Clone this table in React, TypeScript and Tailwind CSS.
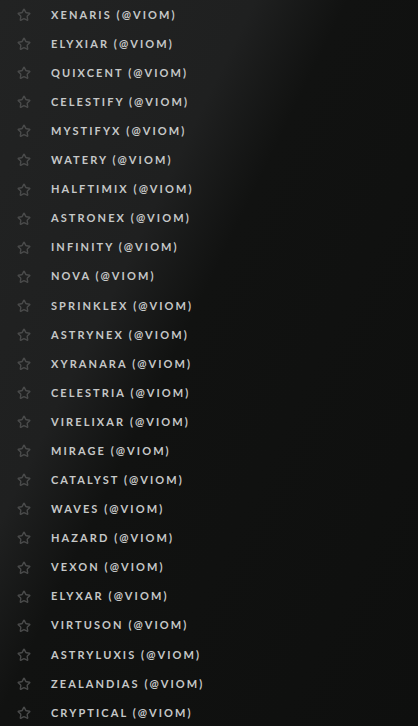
import { Star } from "lucide-react";

const names = [
  "XENARIS", "ELYXIAR", "QUIXCENT", "CELESTIFY", "MYSTIFYX", "WATERY", "HALFTIMIX",
  "ASTRONEX", "INFINITY", "NOVA", "SPRINKLEX", "ASTRYNEX", "XYRANARA", "CELESTRIA",
  "VIRELIXAR", "MIRAGE", "CATALYST", "WAVES", "HAZARD", "VEXON", "ELYXAR", "VIRTUSON",
  "ASTRYLUXIS", "ZEALANDIAS", "CRYPTICAL",
];

const App = () => {
  return (
    <div className="w-[418px] h-[726px] overflow-hidden bg-[#0f100f] bg-[linear-gradient(116deg,#222323_0%,#1f2020_33%,#111211_45%,#0e0f0e_100%)]">
      <ul className="pt-[0.5px]">
        {names.map((n) => (
          <li key={n} className="flex items-center h-[29.08px]">
            <Star size={14} strokeWidth={2.4} className="ml-[17px] text-[#4a4b4b]" />
            <span className="ml-[20px] text-[11px] font-bold tracking-[0.19em] text-[#c6c8c8] font-['Lato',sans-serif]">
              {n} (@VIOM)
            </span>
          </li>
        ))}
      </ul>
    </div>
  );
};

export default App;
